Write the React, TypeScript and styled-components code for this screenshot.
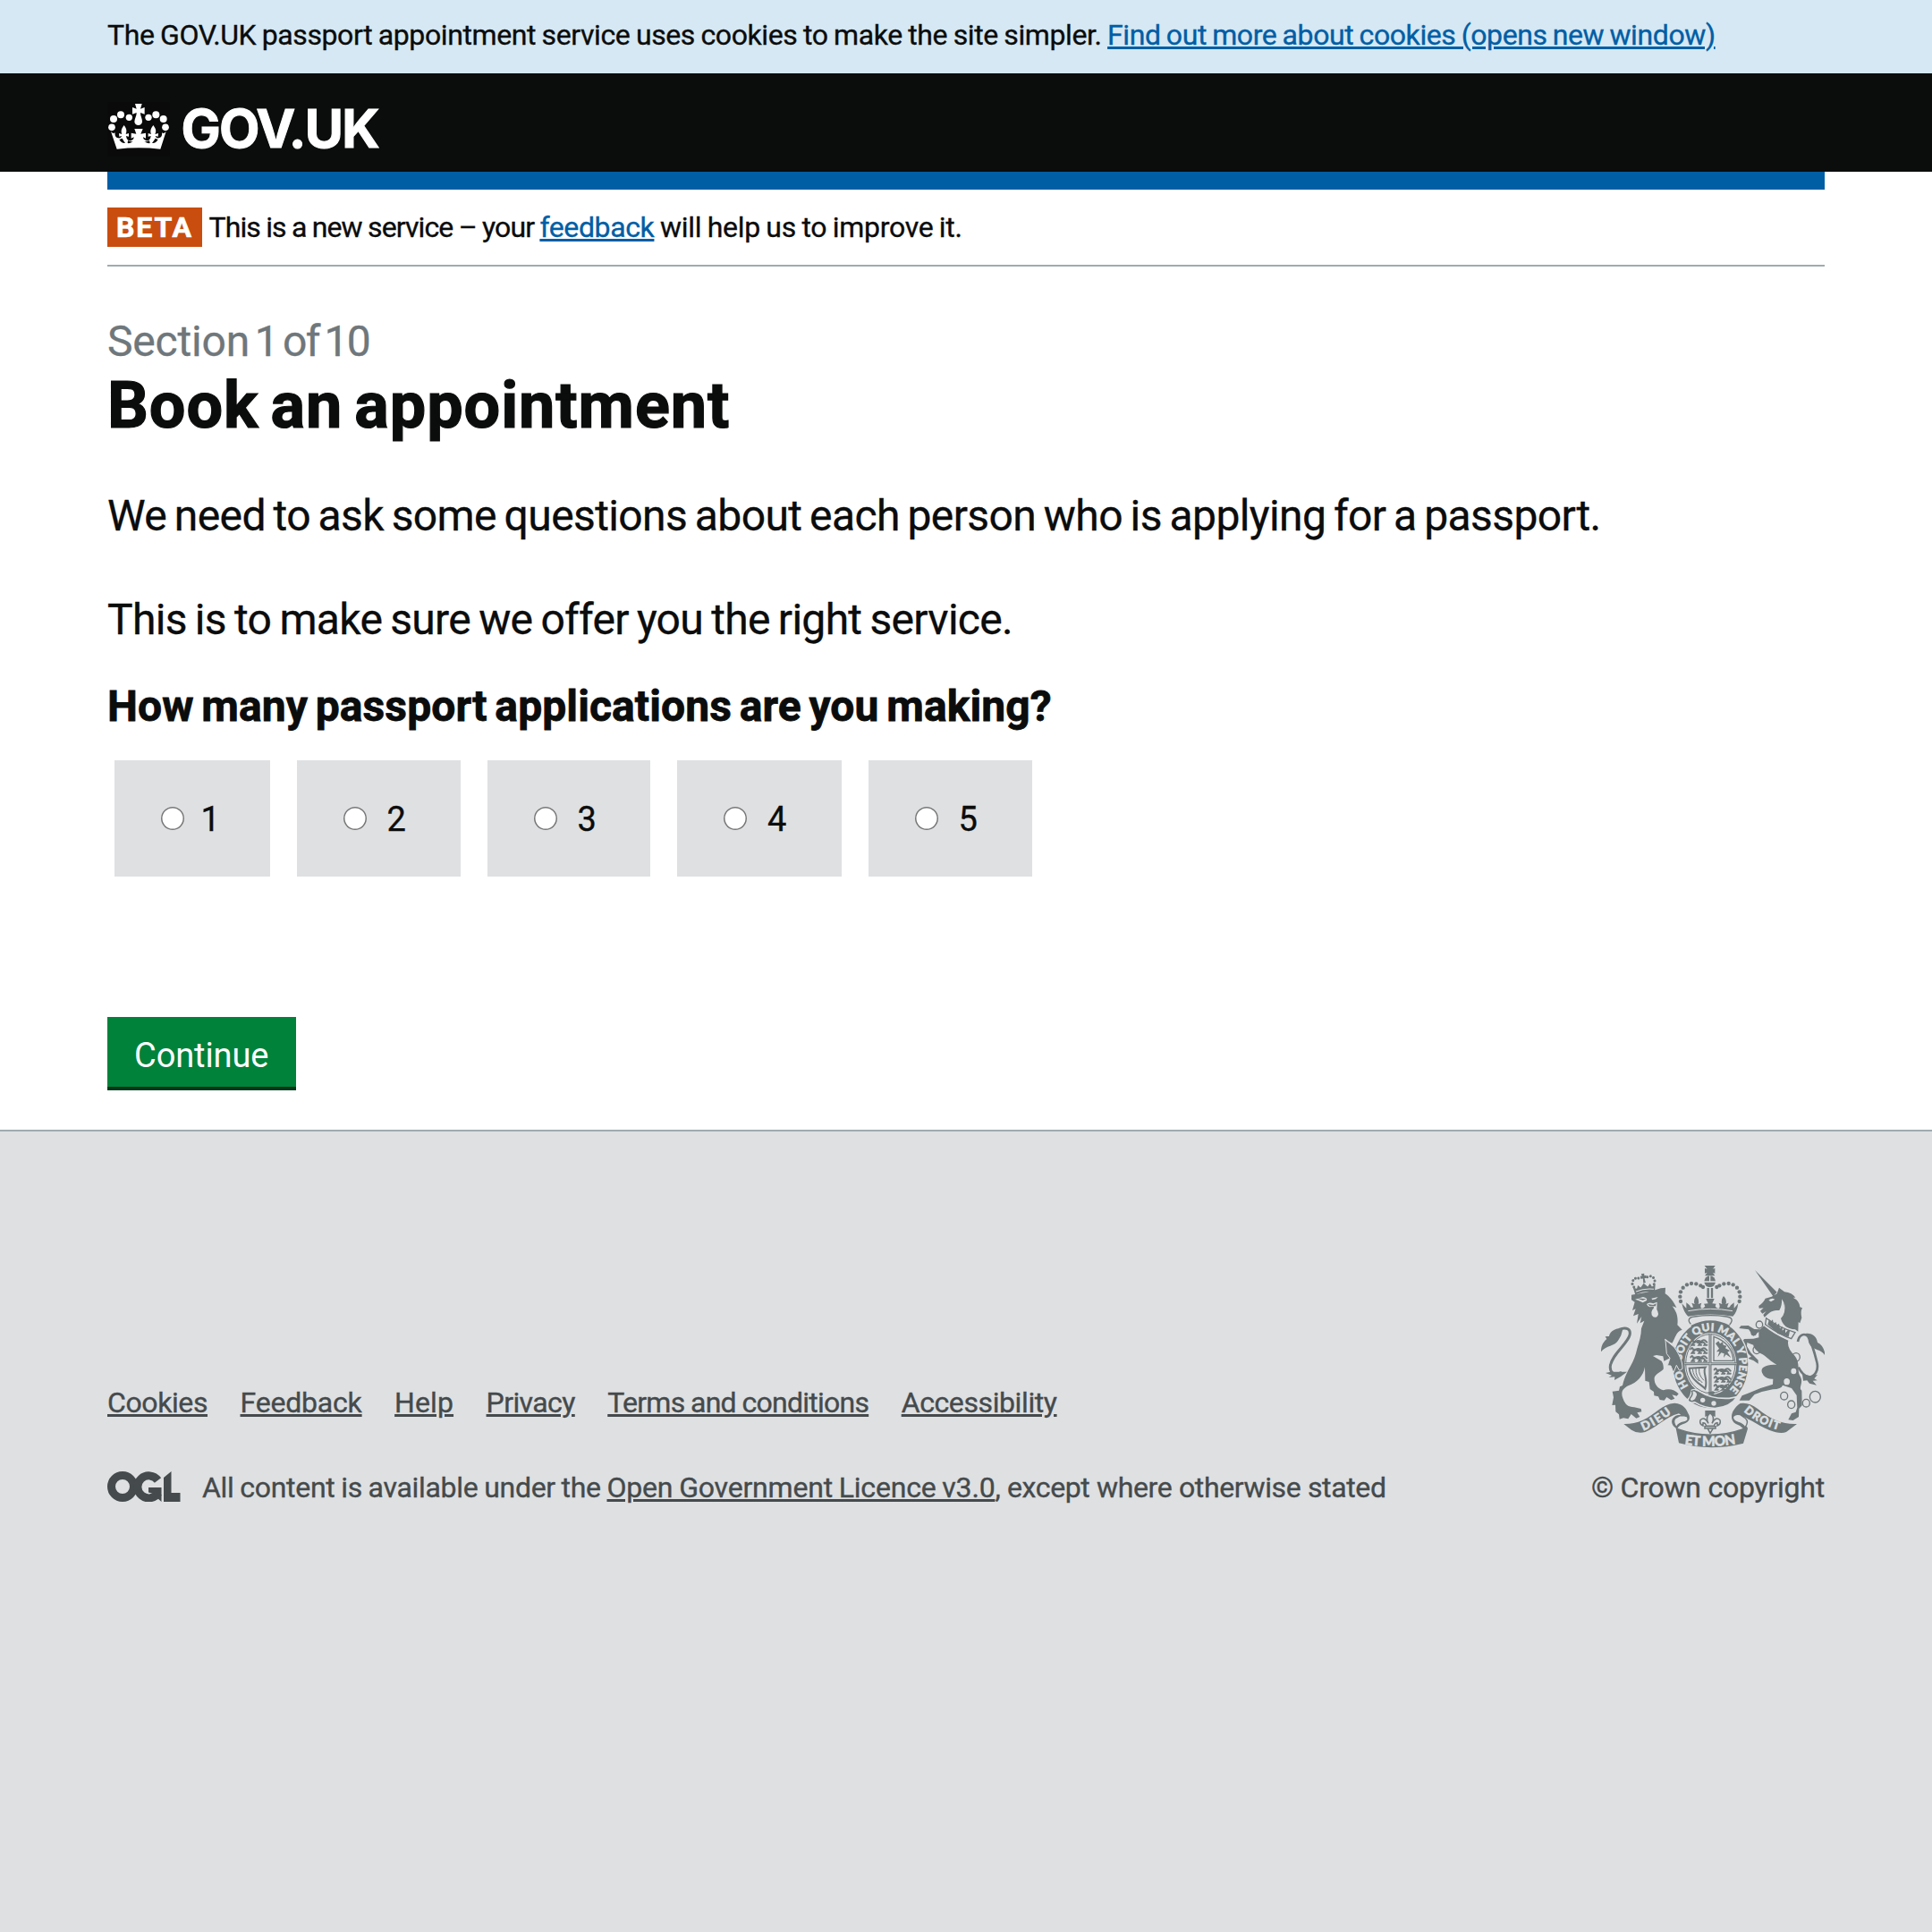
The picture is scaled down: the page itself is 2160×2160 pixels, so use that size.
import React from "react";
import styled, { createGlobalStyle } from "styled-components";

const GlobalStyle = createGlobalStyle`
  * { box-sizing: border-box; }
  body {
    margin: 0;
    background: #fff;
    color: #0b0c0c;
    font-family: Roboto, "Liberation Sans", Arial, sans-serif;
    font-size: 32px;
    line-height: 40px;
    -webkit-text-stroke: 0.35px currentColor;
  }
  h1, h2, p, ul, fieldset { margin: 0; padding: 0; border: 0; }
`;

const Page = styled.div`
  min-height: 2160px;
  display: flex;
  flex-direction: column;
`;

const Container = styled.div`
  margin: 0 120px;
`;

type Spacing = { $letter?: number; $word?: number };

const Run = styled.span<Spacing>`
  white-space: pre;
  letter-spacing: ${(p) => p.$letter ?? 0}px;
  word-spacing: ${(p) => p.$word ?? 0}px;
`;

const Link = styled.a<Spacing & { $tone?: string }>`
  white-space: pre;
  color: ${(p) => p.$tone ?? "#005ea5"};
  letter-spacing: ${(p) => p.$letter ?? 0}px;
  word-spacing: ${(p) => p.$word ?? 0}px;
  text-decoration: underline;
  text-decoration-thickness: 3px;
  text-underline-offset: 2px;
  -webkit-text-stroke: 0.35px ${(p) => p.$tone ?? "#005ea5"};
`;

const CookieBanner = styled.div`
  height: 82px;
  padding: 19px 120px 0;
  background: #d5e8f3;
`;

const Header = styled.header`
  height: 110px;
  padding: 32px 120px 0;
  background: #0b0c0c;
`;

const HomeLink = styled.a`
  display: flex;
  align-items: flex-start;
  gap: 12.5px;
  color: #fff;
`;

const CrownMark = styled.svg`
  display: block;
  width: 70px;
  height: 61px;
  background: #0a0a0a;
`;

const Wordmark = styled.span`
  font-family: Inter, Roboto, sans-serif;
  font-size: 59px;
  font-weight: 700;
  line-height: 59px;
  letter-spacing: -1.8px;
  -webkit-text-stroke: 1px #fff;
`;

const BlueBar = styled.div`
  height: 20px;
  background: #005ea5;
`;

const PhaseBanner = styled.div`
  display: flex;
  height: 86px;
  padding: 20px 0;
  line-height: 44px;
  border-bottom: 2px solid #9fabb0;
`;

const PhaseTag = styled.strong`
  width: 106px;
  height: 44px;
  margin-right: 7.5px;
  padding-left: 10px;
  background: #c94d0f;
  color: #fff;
  letter-spacing: 1.9px;
  -webkit-text-stroke: 0.7px #fff;
`;

const SectionLabel = styled.p`
  margin-top: 54px;
  color: #6f777b;
  font-size: 48px;
  line-height: 60px;
  -webkit-text-stroke: 0.35px #6f777b;
`;

const Title = styled.h1`
  margin-top: 4px;
  font-size: 72px;
  font-weight: 700;
  line-height: 76px;
  -webkit-text-stroke: 1.2px #0b0c0c;
`;

const Lead = styled.p<{ $top: number }>`
  margin-top: ${(p) => p.$top}px;
  font-size: 48px;
  line-height: 60px;
`;

const Question = styled.h2`
  margin-top: 37px;
  font-size: 48px;
  font-weight: 700;
  line-height: 60px;
  -webkit-text-stroke: 0.8px #0b0c0c;
`;

const Choices = styled.fieldset`
  display: flex;
  gap: 30px;
  margin: 30px 0 0 8px;
`;

const Choice = styled.label<{ $width: number; $inset: number; $gap: number }>`
  display: flex;
  align-items: center;
  gap: ${(p) => p.$gap}px;
  width: ${(p) => p.$width}px;
  height: 130px;
  padding-left: ${(p) => p.$inset}px;
  background: #dee0e2;
  font-size: 38px;
`;

const ChoiceText = styled.span`
  padding-top: 2px;
`;

const Radio = styled.input`
  appearance: none;
  width: 26px;
  height: 26px;
  margin: 0;
  border-radius: 50%;
  background: #fff;
  box-shadow: inset 0 0 0 1.5px #767676;
`;

const ContinueButton = styled.button`
  display: block;
  width: 211px;
  height: 82px;
  margin-top: 157px;
  padding: 4px 0 0 30px;
  border: 0;
  border-bottom: 4px solid #003618;
  background: #00823b;
  color: #fff;
  font: 400 38px/74px Roboto, sans-serif;
  text-align: left;
  letter-spacing: -0.1px;
  -webkit-text-stroke: 0;
`;

const ButtonText = styled.span`
  display: block;
  padding-top: 2px;
`;

const Footer = styled.footer`
  flex: 1;
  margin-top: 44px;
  padding: 150px 120px 0;
  border-top: 2px solid #9fabb0;
  background: #dee0e2;
  color: #454a4c;
`;

const FooterMeta = styled.div`
  display: flex;
  justify-content: space-between;
  align-items: flex-end;
`;

const FooterLinks = styled.ul`
  display: flex;
  gap: 36.5px;
  list-style: none;
`;

const Licence = styled.div`
  display: flex;
  margin-top: 55px;
`;

const OglLogo = styled.svg`
  width: 83px;
  height: 34px;
  margin: 2px 23px 0 0;
`;

const Copyright = styled.div`
  display: flex;
  flex-direction: column;
  align-items: flex-end;
  gap: 24px;
`;

const ArmsSvg = styled.svg`
  display: block;
  width: 250px;
  height: 204px;
  -webkit-text-stroke: 0;
`;

const Crown = () => (
  <CrownMark viewBox="30 27 210 183" fill="#fff" aria-hidden="true">
    {[[45, 112, 11.5], [51, 84, 12], [75, 70, 12], [103, 79, 11], [168, 79, 11], [193, 70, 12], [218, 84, 12], [225, 112, 11.5]].map(
      ([x, y, r]) => <circle key={x} cx={x} cy={y} r={r} />
    )}
    <path d="M123 33H146L141 50L155 45V68L141 63C140 72 148 84 147 94C146 101 141 105 134 105C127 105 122 101 121 94C121 84 129 72 128 63L114 68V45L128 50Z" />
    <path d="M42 126C47 132 51 133 56 130C54 140 59 147 66 148C73 149 77 146 78 141L70 143L69 132L79 135C75 125 77 117 86 105C95 117 96 125 92 135L102 132V143L93 141C94 152 101 159 109 157C116 155 119 150 119 145L110 149V131L127 134L121 117H149L142 134L159 131V149L150 145C150 150 154 155 161 157C168 159 175 152 176 141L167 143V132L177 135C173 125 175 117 184 105C193 117 195 125 190 135L201 132L200 143L191 141C192 146 197 149 203 148C210 147 215 140 213 130C218 133 222 132 227 126L208 185Q135 177 62 185Z" />
    <path d="M70 153Q78 167 90 165Q84 157 80 149ZM98 165Q108 167 116 159Q108 162 99 156ZM173 165Q163 167 154 159Q162 162 171 156ZM200 153Q192 167 180 165Q186 157 191 149Z" fill="#0a0a0a" />
  </CrownMark>
);

const GARTER = "M427 488A97 112 0 0 1 427 264A97 112 0 0 1 427 488";

const Lions = ({ x, y }: { x: number; y: number }) => (
  <g transform={`translate(${x} ${y})`} fill="none" stroke="#6e7779" strokeWidth="6" strokeLinecap="round">
    {[0, 27, 54].map((dy) => (
      <path key={dy} d={`M3 ${dy + 4}q5 -8 8 1t7 1q10 -6 19 0q8 -8 14 -4l6 6M17 ${dy + 5}q-6 6 -10 12h8M24 ${dy + 8}q12 3 20 0q9 3 5 9h8M36 ${dy + 8}l-6 9h8`} />
    ))}
  </g>
);

const Quarterings = () => (
  <g>
    <ellipse cx="427" cy="374" rx="87" ry="104" fill="#dee0e2" />
    <ellipse cx="427" cy="374" rx="83" ry="99" fill="none" stroke="#6e7779" strokeWidth="3" />
    <path d="M426 272V478M340 374H515" stroke="#6e7779" strokeWidth="9" />
    <path d="M426 272V478M340 374H515" stroke="#dee0e2" strokeWidth="2" />
    <Lions x={358} y={294} />
    <Lions x={437} y={390} />
    <path d="M438 283V364H504Q500 305 438 283Z" fill="none" stroke="#6e7779" strokeWidth="4" />
    <path d="M444 306l10-8 5 9 9-6 2 10 11 3-4 8 15 8-8 5 12 19-17-11-8 11 2-14-10-3-12 15 6-19-10 1 9-11z" />
    <path d="M356 389L410 386C398 402 421 426 409 458C394 441 360 430 356 389Z" fill="none" stroke="#6e7779" strokeWidth="6" />
    <path d="M367 391Q369 418 390 432M378 390Q376 418 400 438M389 389Q386 412 405 430" fill="none" stroke="#6e7779" strokeWidth="3" />
  </g>
);

const RoyalCrown = () => (
  <g>
    <path d="M407 45h36l-8 11 7-2v17l-7-3 7 11h-34l8-11-8 3V54l8 2z" />
    <circle cx="425" cy="98" r="19" />
    <path d="M405 99H445M425 79V98" stroke="#dee0e2" strokeWidth="4" />
    {[
      [327, 165], [325, 149], [327, 133], [335, 119], [348, 109], [363, 105], [379, 106], [394, 112], [402, 117],
      [448, 117], [457, 112], [472, 106], [488, 105], [503, 109], [516, 119], [524, 133], [526, 149], [524, 165],
    ].map(([x, y]) => <circle key={`${x}-${y}`} cx={x} cy={y} r="6.5" />)}
    <path d="M419 120v34M432 120v34" stroke="#6e7779" strokeWidth="7" />
    <path d="M331 172L346 188V169L357 178Q362 189 369 184L364 170L374 174Q368 160 380 147Q391 160 386 174L397 170Q391 184 397 188Q405 190 409 181L405 173L419 172L412 156H440L433 172L446 173L443 181Q447 190 455 188Q461 184 455 170L466 174Q461 160 471 147Q484 160 478 174L488 170L483 184Q490 189 495 178L506 169V188L520 172Q516 202 502 215Q427 202 352 215Q337 202 331 172Z" />
    <path d="M352 197Q427 183 501 197" stroke="#dee0e2" strokeWidth="3" fill="none" />
    <path d="M361 241C348 226 356 218 373 216Q427 208 481 216C500 219 504 228 491 243" fill="#dee0e2" stroke="#6e7779" strokeWidth="4" />
  </g>
);

const Lion = () => (
  <g>
    <g transform="rotate(-8 203 105)">
      {[[169, 112], [165, 101], [169, 90], [178, 84], [188, 85], [218, 85], [229, 84], [238, 90], [241, 101], [237, 112]].map(([x, y]) => (
        <circle key={`${x}-${y}`} cx={x} cy={y} r="4.5" />
      ))}
      <path d="M199 72h10v7h6v9h-7l2 15-8 0 1-15h-8v-9h6zM166 114l12 5 5-11 8 9 12-13 12 13 9-9 5 11 12-5-5 24q-34-9-66 0z" />
      <path d="M174 128q29-8 60 0" stroke="#dee0e2" strokeWidth="3" fill="none" />
    </g>
    <path d="M162 143Q214 137 260 121L276 119L275 139C290 149 302 163 313 186L299 181C314 201 319 217 316 244L332 260C310 267 309 289 298 305L276 294L306 319C321 342 334 365 333 391L323 397L313 379L303 404L294 381L283 380L291 355L271 365L268 349L246 345L234 348L263 365Q271 378 269 392C260 402 244 406 239 420C237 439 247 457 269 463C285 456 308 460 320 475L314 482L298 478L307 491L295 496L280 486L272 497L257 495L252 484L238 481L237 468L224 459L221 435L208 431L207 385C202 414 181 438 151 448C134 457 124 468 134 492C141 511 151 519 171 520L194 525L196 535L181 538L190 552L178 557L161 543L151 559L135 556L122 560L120 544L109 535L108 512L97 513L102 487L98 467L120 464L123 451L132 447C144 394 169 380 181 323C188 301 195 278 195 256L205 230L191 238L196 216L180 239L185 207L168 214L176 190L165 195L173 167L162 160Z" />
    <path d="M174 158L201 150Q217 153 213 162L200 169Q184 160 174 158ZM229 155L251 150L244 157 232 160ZM213 174Q221 166 235 172L248 167L247 192Q256 207 248 216Q237 223 230 211Q227 201 232 193Q238 189 237 182L223 184Q216 183 213 174Z" fill="#dee0e2" />
    <path d="M217 174l18 3 10-5-2 9-20 0zM176 154l24 7 12-4" fill="#6e7779" />
    <path d="M274 292L306 317Q328 343 334 370" stroke="#dee0e2" strokeWidth="4" fill="none" />
    <path d="M121 259C145 249 161 258 156 278C150 306 95 344 91 382C89 405 104 415 129 403" stroke="#6e7779" strokeWidth="9" fill="none" />
    <path d="M134 254C97 254 88 273 87 282L74 283L79 291C65 303 60 317 60 334C76 311 107 317 119 293L127 279ZM92 401L75 405L96 413L86 420L106 418L105 429Q127 418 147 401Z" />
  </g>
);

const Unicorn = () => (
  <g>
    <path d="M576 60L650 134L637 148ZM632 149L650 139L657 119L675 133Q701 136 712 152L704 152Q726 163 727 184L735 187Q728 200 733 220L727 238L722 234L721 266L711 259Q672 257 663 222Q681 204 675 171Q677 191 659 195C638 194 627 200 617 210L608 218L604 210L614 198L601 206L594 197L605 187L590 188L589 180Q605 169 611 155Z" />
    <path d="M622 161Q632 152 643 158L630 166ZM666 157Q684 180 666 205Q650 221 632 222Q669 197 666 157Z" fill="#dee0e2" />
    <path d="M614 221L611 242Q657 276 698 290L711 269Q658 253 614 221Z" fill="#dee0e2" stroke="#6e7779" strokeWidth="4" />
    <path d="M619 242l5-17 5 8 7-7 2 14 9-6 1 13 9-8 3 17 8-8 0 15 10-9 0 17 10-11 5 4-4 20-36-11z" />
    <path d="M606 247Q642 277 688 296Q682 320 710 348C729 371 716 399 728 416C741 438 720 455 733 464L734 514L724 525L723 552L704 564L688 562L699 541L713 536L718 521L716 480L699 456L669 446Q665 459 636 460Q602 466 575 477L557 497L524 497L533 481L553 473L595 456L636 443L637 425Q617 426 605 413C586 386 612 377 649 377C629 367 614 350 602 343C586 335 571 322 571 311L550 303L549 315L562 337L587 362V374L571 363L552 356L564 350L543 331L531 305L540 291L571 290L589 286L589 267L571 281L555 259L523 255L529 247L554 246L574 258L594 259Z" />
    <path d="M720 300C724 277 741 270 754 282C766 303 777 340 784 369C791 397 776 418 757 419Q738 416 722 386" stroke="#6e7779" strokeWidth="8" fill="none" />
    <path d="M735 275C763 265 784 281 786 303Q803 310 810 335V345C797 325 773 328 761 311Q751 298 758 283ZM735 408L762 415L786 411L775 424L785 430L770 431L783 446L759 440L751 430L738 431Z" />
    {[[591, 243, 11, 0], [572, 269, 8, 0], [582, 328, 12, 0], [714, 352, 13, 0], [674, 482, 12, 0], [698, 511, 12, 0], [748, 506, 12, 0], [778, 485, 18, 0], [706, 399, 7, 1], [683, 434, 8, 1]].map(
      ([x, y, r, solid]) => (
        <ellipse key={x} cx={x} cy={y} rx={r} ry={r + 1} fill={solid ? "#dee0e2" : "none"} stroke={solid ? "#dee0e2" : "#6e7779"} strokeWidth="4" />
      )
    )}
  </g>
);

const Scrolls = () => (
  <g>
    <path d="M136 576Q168 577 200 563C242 544 264 509 307 506C337 508 346 526 355 546Q362 564 342 574Q320 580 316 592Q427 632 537 592Q527 580 511 575C488 561 497 527 527 507Q555 502 585 525C633 563 670 578 717 576L681 603Q661 611 625 597C580 579 548 550 524 550Q505 560 522 569Q552 580 552 592L537 641Q427 669 321 640L311 590Q291 575 300 558Q312 542 329 547L321 541C276 553 242 591 208 603Q183 610 162 596Z" />
    <path d="M325 548Q342 548 350 552Q356 570 332 571Q314 578 314 588Q298 570 309 557ZM527 545Q508 541 502 553Q502 566 520 571Q538 576 542 588Q558 569 544 557ZM317 593Q427 632 537 593" fill="#dee0e2" stroke="#6e7779" strokeWidth="4" />
    <g fill="#dee0e2" stroke="#dee0e2" strokeWidth="1.5" fontFamily="Lato, sans-serif" fontWeight="900" fontSize="46">
      <path id="dieu-line" d="M202 599Q250 580 304 535" fill="none" stroke="none" />
      <path id="mon-line" d="M340 644Q427 658 514 642" fill="none" stroke="none" />
      <path id="droit-line" d="M538 534Q590 580 664 598" fill="none" stroke="none" />
      <text fontSize="40"><textPath href="#dieu-line" textLength="112">DIEU</textPath></text>
      <text><textPath href="#mon-line" textLength="173">ET MON</textPath></text>
      <text fontSize="38"><textPath href="#droit-line" textLength="134">DROIT</textPath></text>
    </g>
  </g>
);

const RoyalArms = () => (
  <ArmsSvg viewBox="60 45 750 612" fill="#6e7779" aria-label="Royal coat of arms">
    <Lion />
    <Unicorn />
    <ellipse cx="427" cy="376" rx="130" ry="151" fill="#dee0e2" />
    <ellipse cx="427" cy="376" rx="126" ry="147" />
    <RoyalCrown />
    <path d="M361 246Q427 211 493 246L480 262Q427 239 374 262Z" />
    <Quarterings />
    <g fill="#dee0e2" stroke="#dee0e2" strokeWidth="1.5" fontFamily="Lato, sans-serif" fontWeight="900" fontSize="36">
      <path id="garter-line" d={GARTER} fill="none" stroke="none" />
      <text><textPath href="#garter-line" startOffset="86" textLength="500">HO<tspan dx="32">SOIT QUI MAL Y PENSE</tspan></textPath></text>
    </g>
    <path d="M276 294L306 319C321 342 334 365 333 391L323 397L313 379L303 404L294 381L283 380L291 355L280 340Z" stroke="#dee0e2" strokeWidth="3" />
    <path d="M364 463Q377 457 390 467Q429 493 490 490L516 485Q495 519 442 524Q402 521 374 503Q351 507 351 494Q362 485 364 463Z" stroke="#dee0e2" strokeWidth="5" />
    <path d="M372 464Q389 471 380 486Q376 499 364 500Q353 496 361 486Q370 475 364 466Z" fill="#dee0e2" stroke="#6e7779" strokeWidth="4" />
    <path d="M417 470Q431 487 443 470L435 466Z" />
    <circle cx="401" cy="496" r="8" fill="#dee0e2" />
    <circle cx="438" cy="507" r="8" fill="#dee0e2" />
    <Scrolls />
    <path d="M409 531H443V552L426 545L409 552Z" />
    <path d="M426 539C412 551 414 564 420 574Q407 549 393 563Q389 577 402 582V572Q411 572 413 583H439Q441 572 450 572V582Q463 577 459 563Q445 549 432 574C438 564 440 551 426 539ZM408 584H444V591H408ZM418 592L426 607L435 592" fill="#dee0e2" stroke="#6e7779" strokeWidth="4.5" />
  </ArmsSvg>
);

const Ogl = () => (
  <OglLogo viewBox="0 0 83 34" aria-label="OGL">
    <g fill="none" stroke="#454a4c" strokeWidth="9">
      <circle cx="17" cy="17" r="12.5" />
      <path d="M56.5 10A12.5 12.5 0 1 0 57 24" />
    </g>
    <path d="M46 18H60.5V34L55 29L52 25L46 23.5ZM63 7L71.5 0V24H81.5V34H63Z" fill="#454a4c" />
  </OglLogo>
);

const choices = [
  { label: "1", width: 174, inset: 52, gap: 18.5 },
  { label: "2", width: 183, inset: 52, gap: 22.5 },
  { label: "3", width: 182, inset: 52, gap: 22.5 },
  { label: "4", width: 184, inset: 52, gap: 23 },
  { label: "5", width: 183, inset: 52, gap: 22.5 },
];

const footerLinks = [
  { label: "Cookies", letter: -0.4 },
  { label: "Feedback", letter: -0.2 },
  { label: "Help", letter: 0.1 },
  { label: "Privacy", letter: -0.6 },
  { label: "Terms and conditions", letter: -0.75, word: -0.6 },
  { label: "Accessibility", letter: -0.4 },
];

export default function App() {
  return (
    <Page>
      <GlobalStyle />
      <CookieBanner>
        <Run $letter={-0.4} $word={-1.02}>{"The GOV.UK passport appointment service uses cookies to make the site simpler. "}</Run>
        <Link $letter={-0.4} $word={-1.35}>Find out more about cookies (opens new window)</Link>
      </CookieBanner>
      <Header>
        <HomeLink>
          <Crown />
          <Wordmark>GOV.UK</Wordmark>
        </HomeLink>
      </Header>
      <Container as="main">
        <BlueBar />
        <PhaseBanner>
          <PhaseTag>BETA</PhaseTag>
          <Run $letter={-0.9} $word={-0.75}>{"This is a new service – your "}</Run>
          <Link $letter={-0.38}>feedback</Link>
          <Run $letter={-0.3} $word={-1.1}>{" will help us to improve it."}</Run>
        </PhaseBanner>
        <SectionLabel>
          <Run $letter={-0.2}>Section</Run>
          <Run $letter={-1.7} $word={-4.3}>{" 1 of 10"}</Run>
        </SectionLabel>
        <Title><Run $letter={0.9} $word={-5.6}>Book an appointment</Run></Title>
        <Lead $top={55}>
          <Run $letter={-0.6} $word={-2.65}>We need to ask some questions about each person who is applying for a passport.</Run>
        </Lead>
        <Lead $top={56}>
          <Run $letter={-0.7} $word={-2.06}>This is to make sure we offer you the right service.</Run>
        </Lead>
        <Question><Run $letter={0.1} $word={-3.3}>How many passport applications are you making?</Run></Question>
        <Choices>
          {choices.map((c) => (
            <Choice key={c.label} $width={c.width} $inset={c.inset} $gap={c.gap}>
              <Radio type="radio" name="applications" />
              <ChoiceText>{c.label}</ChoiceText>
            </Choice>
          ))}
        </Choices>
        <ContinueButton><ButtonText>Continue</ButtonText></ContinueButton>
      </Container>
      <Footer>
        <FooterMeta>
          <div>
            <FooterLinks>
              {footerLinks.map((l) => (
                <li key={l.label}>
                  <Link $tone="#454a4c" $letter={l.letter} $word={l.word}>{l.label}</Link>
                </li>
              ))}
            </FooterLinks>
            <Licence>
              <Ogl />
              <Run $letter={-0.3} $word={-0.9}>{"All content is available under the "}</Run>
              <Link $tone="#454a4c" $letter={-0.2} $word={-0.9}>Open Government Licence v3.0</Link>
              <Run $letter={-0.38} $word={0.1}>, except where otherwise stated</Run>
            </Licence>
          </div>
          <Copyright>
            <RoyalArms />
            <Run $letter={-0.23}>© Crown copyright</Run>
          </Copyright>
        </FooterMeta>
      </Footer>
    </Page>
  );
}
